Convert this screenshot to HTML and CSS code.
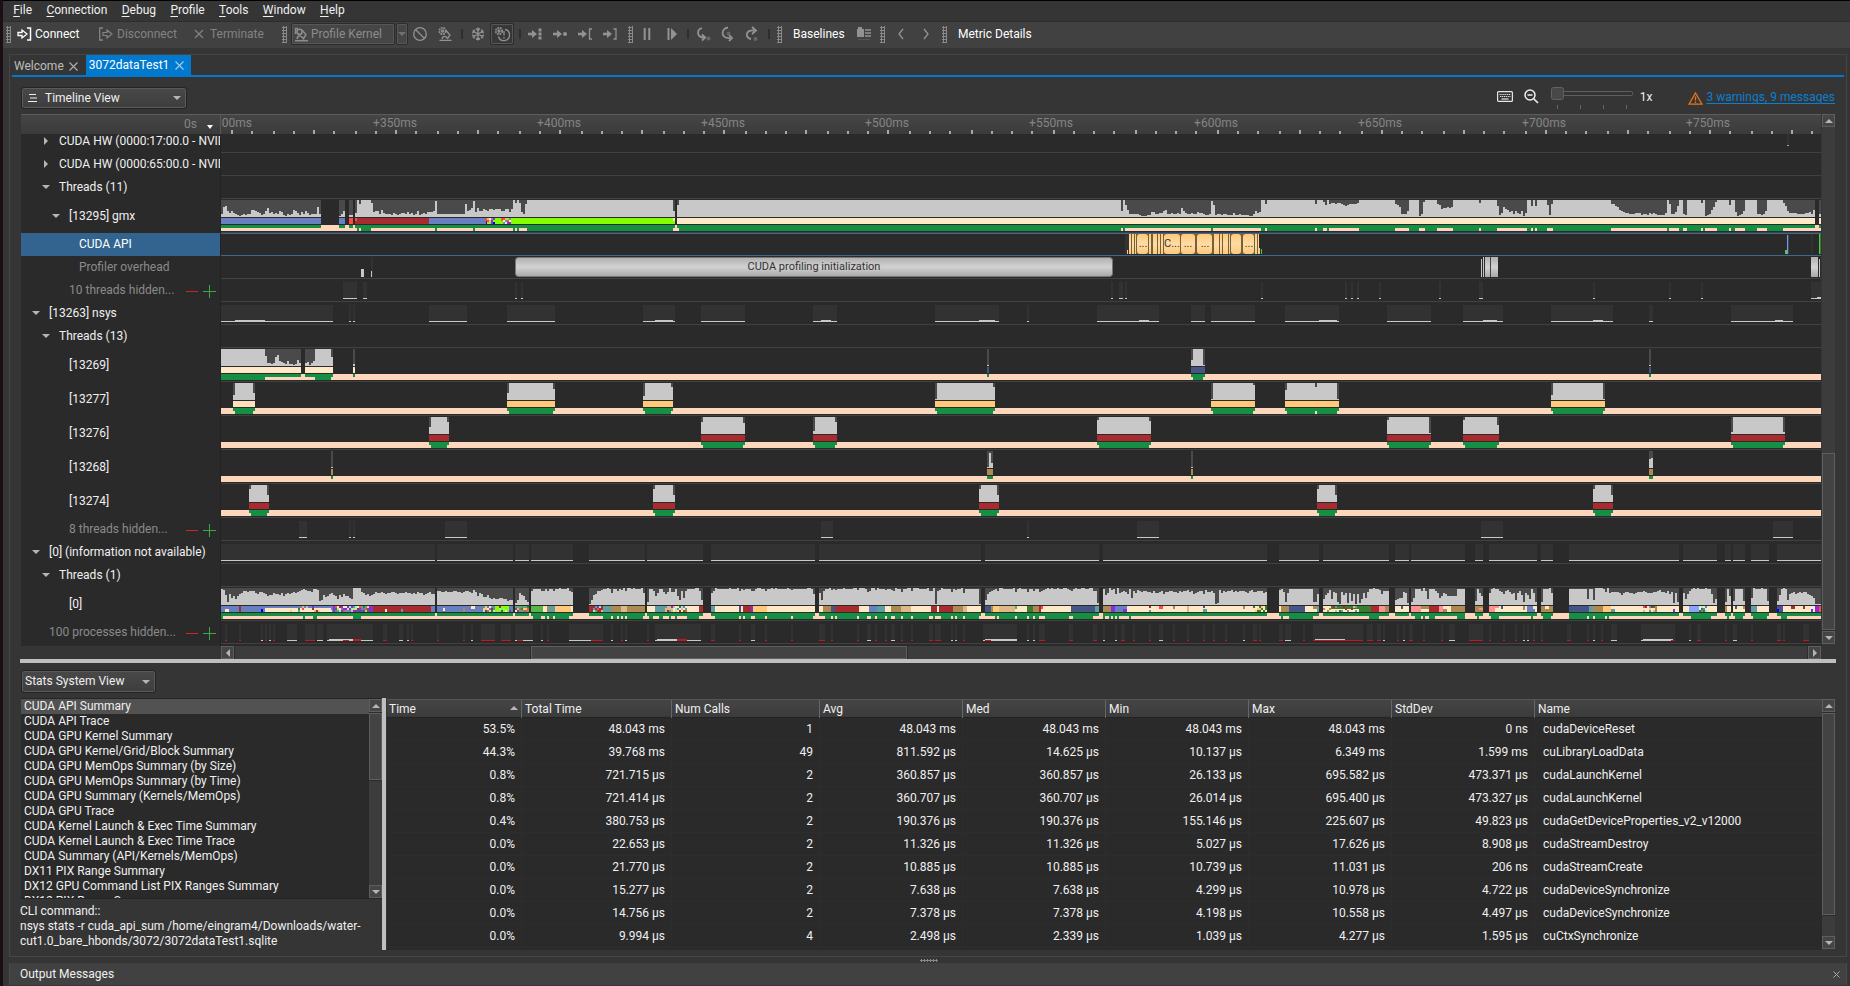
FILE: index.html
```html
<!DOCTYPE html>
<html lang="en">
<head>
<meta charset="utf-8">
<title>3072dataTest1</title>
<link rel="stylesheet" href="styles.css">
</head>
<body>
<div class="window">
  <nav class="menubar">
    <span><u>F</u>ile</span><span><u>C</u>onnection</span><span><u>D</u>ebug</span><span><u>P</u>rofile</span><span><u>T</u>ools</span><span><u>W</u>indow</span><span><u>H</u>elp</span>
  </nav>

  <div class="toolbar">
    <i class="grip"></i>
    <div class="tool on w-connect"><svg width="16" height="14" viewBox="0 0 16 14"><path d="M1 5.500h4V3l5 4-5 4V8.500H1z" fill="none" stroke="currentColor" stroke-width="1.300"/><path d="M10 1h3.500v12H10" fill="none" stroke="currentColor" stroke-width="1.500"/></svg>Connect</div>
    <div class="tool w-disconnect"><svg width="16" height="14" viewBox="0 0 16 14"><path d="M5 5.500h4V3l5 4-5 4V8.500H5z" fill="none" stroke="currentColor" stroke-width="1.200"/><path d="M5 1H1.700v12H5" fill="none" stroke="currentColor" stroke-width="1.300"/></svg>Disconnect</div>
    <div class="tool w-terminate"><svg width="10" height="10" viewBox="0 0 10 10"><path d="M1 1l8 8M9 1l-8 8" stroke="currentColor" stroke-width="1.200"/></svg>Terminate</div>
    <i class="grip"></i>
    <div class="framed w-kernel"><svg width="15" height="15" viewBox="0 0 15 15"><path d="M1.500 7V1.500H4" fill="none" stroke="currentColor" stroke-width="1.500"/><circle cx="5.500" cy="4.800" r="2.600" fill="none" stroke="currentColor" stroke-width="1.600"/><path d="M8 3l4 4.500-2.500 4M1 13.700h13M3 12c1-4.500 4-4 7 .5" fill="none" stroke="currentColor" stroke-width="1.500"/></svg>Profile Kernel</div>
    <div class="framed w-drop"><b class="tri down dim"></b></div>
    <svg class="ic a1" width="16" height="16" viewBox="0 0 16 16"><circle cx="8" cy="8" r="6.300"/><path d="M3.500 3.500l9 9"/></svg>
    <svg class="ic a2" width="16" height="16" viewBox="0 0 16 16"><circle cx="5.500" cy="5" r="3.200" stroke-dasharray="1.800 .8" stroke-width="1.800"/><circle cx="5.500" cy="5" r="1"/><path d="M9 4.500l4 4.500-2.500 3.500M2.500 14.300h12M5 13c1-4 4-3 6 0"/></svg>
    <i class="sep"></i>
    <svg class="ic a3" width="16" height="16" viewBox="0 0 16 16"><path d="M8 1.500v13M2.400 4.700l11.200 6.600M2.400 11.300l11.200-6.600M6 2.500l2 2 2-2M6 13.500l2-2 2 2M2 7l2.500-1L4 3.500M14 7l-2.500-1 .5-2.500M2 9l2.500 1L4 12.500M14 9l-2.500 1 .5 2.500"/></svg>
    <div class="framed active"><svg class="ic" width="16" height="16" viewBox="0 0 16 16"><circle cx="5" cy="5" r="3.200" stroke-dasharray="1.800 .8" stroke-width="1.800"/><circle cx="5" cy="5" r="1"/><path d="M11 3.500a5.600 5.600 0 1 1-6.500 7M10 5v4.500M10 11v1.500"/></svg></div>
    <i class="sep"></i>
    <svg class="ic step" width="16" height="14" viewBox="0 0 16 14"><path d="M1 7h5" stroke-width="2.600"/><path d="M5 3l5 4-5 4z" class="f"/><path d="M13 1.500v11" stroke-width="3" stroke-dasharray="3 1"/></svg>
    <svg class="ic step" width="16" height="14" viewBox="0 0 16 14"><path d="M1 7h5" stroke-width="2.600"/><path d="M5 3l5 4-5 4z" class="f"/><circle cx="13" cy="7" r="2" class="f"/></svg>
    <svg class="ic step" width="16" height="14" viewBox="0 0 16 14"><path d="M1 7h5" stroke-width="2.600"/><path d="M5 3l5 4-5 4z" class="f"/><path d="M15 2h-2.500v10H15"/></svg>
    <svg class="ic step" width="16" height="14" viewBox="0 0 16 14"><path d="M1 7h5" stroke-width="2.600"/><path d="M5 3l5 4-5 4z" class="f"/><path d="M11.500 2H14v10h-2.500"/></svg>
    <i class="grip g3"></i>
    <svg class="ic a4" width="14" height="14" viewBox="0 0 14 14"><path d="M4.700 1v12M9.300 1v12" stroke-width="2"/></svg>
    <svg class="ic a5" width="14" height="14" viewBox="0 0 14 14"><path d="M3.500 1v12" stroke-width="2"/><path d="M6 1l6 6-6 6z" class="f"/></svg>
    <i class="sep s2"></i>
    <svg class="ic step" width="15" height="16" viewBox="0 0 15 16"><path d="M6 2C0 4 1 11.500 8 11.500M6 8.500l3.200 3L6 14.500" stroke-width="1.800"/><circle cx="12.500" cy="12.500" r="2" class="f dimf"/></svg>
    <svg class="ic step" width="15" height="16" viewBox="0 0 15 16"><path d="M8 1.500C1 2 0 13 10 12M9 9l3 3-3 3" stroke-width="1.800"/><circle cx="8.500" cy="7.500" r="2" class="f dimf"/></svg>
    <svg class="ic step" width="15" height="16" viewBox="0 0 15 16"><path d="M7 13C1 12 1 4 10 4.500M8 1l4 3.500-4 3.500" stroke-width="1.800"/><circle cx="11.500" cy="13" r="2" class="f dimf"/></svg>
    <i class="sep s3"></i><i class="grip g4"></i>
    <div class="tool on w-base">Baselines</div>
    <svg class="ic a6" width="14" height="14" viewBox="0 0 14 14"><path d="M0 2h7v8H0zM1 0h4v2H1z" class="f"/><path d="M8 3h6M8 6h6M8 9h6" /><path d="M1 12.500h12" stroke="#555"/></svg>
    <i class="grip g5"></i>
    <svg class="ic a7" width="8" height="12" viewBox="0 0 8 12"><path d="M6 1L2 6l4 5"/></svg>
    <svg class="ic a8" width="8" height="12" viewBox="0 0 8 12"><path d="M2 1l4 5-4 5"/></svg>
    <i class="grip g6"></i>
    <div class="tool on w-metric">Metric Details</div>
  </div>

  <section class="panel">
    <div class="tabs">
      <div class="tab">Welcome<svg width="9" height="9" viewBox="0 0 9 9"><path d="M.5 .5l8 8M8.500 .5l-8 8"/></svg></div>
      <div class="tab current">3072dataTest1<svg width="9" height="9" viewBox="0 0 9 9"><path d="M.5 .5l8 8M8.500 .5l-8 8"/></svg></div>
    </div>

    <div class="viewbar">
      <div class="combo c-time"><svg width="10" height="10" viewBox="0 0 10 10"><path d="M1 1.500h7M2 5h7M0 8.500h9" stroke="#eee" stroke-width="1.200"/></svg><span>Timeline View</span><b class="tri down"></b></div>
      <div class="viewtools">
        <svg class="kbd" width="16" height="11" viewBox="0 0 16 11"><rect x=".6" y=".6" width="14.800" height="9.800" rx="1" fill="none" stroke="#e6e6e6" stroke-width="1.200"/><path d="M2.500 3.500h11M3 5.500h10.500" stroke="#e6e6e6" stroke-width="1.100" stroke-dasharray="1.200 .7"/><path d="M4.500 8h7" stroke="#e6e6e6" stroke-width="1.200"/></svg>
        <svg class="mag" width="15" height="15" viewBox="0 0 15 15"><circle cx="6" cy="6" r="5" fill="none" stroke="#eee" stroke-width="1.500"/><path d="M3.500 6h5M9.700 9.700l4.300 4.300" stroke="#eee" stroke-width="1.600"/></svg>
        <svg class="slider" width="84" height="24" viewBox="0 0 84 24"><rect x="12.500" y="4.500" width="69" height="4" rx="1" fill="#333" stroke="#5f5f5f"/><rect x=".5" y=".5" width="12" height="12" rx="2" fill="#484848" stroke="#626262"/><path d="M6.500 18v4M29.500 18v4M52.500 18v4M75.500 18v4" stroke="#666"/></svg>
        <span class="zoomlabel">1x</span>
        <svg class="warn" width="15" height="13" viewBox="0 0 15 13"><path d="M7.500 1L14 12.200H1z" fill="none" stroke="#e8761f" stroke-width="1.300"/><path d="M7.500 4.500v4M7.500 9.500v1.500" stroke="#e8761f" stroke-width="1.300"/></svg>
        <a class="warnlink">3 warnings, 9 messages</a>
      </div>
    </div>

    <div class="timeline">
      <div class="corner">0s<b class="tri down white"></b></div>
      <div class="ruler"><svg id="ruler" width="1600" height="20"></svg></div>
      <div class="labels">
        <div class="lb first l2"><b class="tri right"></b>CUDA HW (0000:17:00.0 - NVIDIA)</div>
        <div class="lb l2"><b class="tri right"></b>CUDA HW (0000:65:00.0 - NVIDIA)</div>
        <div class="lb l2"><b class="tri down"></b>Threads (11)</div>
        <div class="lb tall l3"><b class="tri down"></b>[13295] gmx</div>
        <div class="lb l4 selected">CUDA API</div>
        <div class="lb l4 muted">Profiler overhead</div>
        <div class="lb l3 muted">10 threads hidden...<i class="minus"></i><i class="plus"></i></div>
        <div class="lb l1"><b class="tri down"></b>[13263] nsys</div>
        <div class="lb l2"><b class="tri down"></b>Threads (13)</div>
        <div class="lb tall l3">[13269]</div>
        <div class="lb tall l3">[13277]</div>
        <div class="lb tall l3">[13276]</div>
        <div class="lb tall l3">[13268]</div>
        <div class="lb tall l3">[13274]</div>
        <div class="lb l3 muted">8 threads hidden...<i class="minus"></i><i class="plus"></i></div>
        <div class="lb l1"><b class="tri down"></b>[0] (information not available)</div>
        <div class="lb l2"><b class="tri down"></b>Threads (1)</div>
        <div class="lb tall l3">[0]</div>
        <div class="lb l1 muted">100 processes hidden...<i class="minus"></i><i class="plus"></i></div>
      </div>
      <div class="lanes">
        <div class="lane first"><svg data-lane="hw"></svg></div>
        <div class="lane"></div>
        <div class="lane"></div>
        <div class="lane tall"><svg data-lane="gmx"></svg></div>
        <div class="lane picked"><svg data-lane="api"></svg></div>
        <div class="lane"><svg data-lane="overhead"></svg></div>
        <div class="lane"><svg data-lane="hidden10"></svg></div>
        <div class="lane"><svg data-lane="nsys"></svg></div>
        <div class="lane"></div>
        <div class="lane tall"><svg data-lane="t13269"></svg></div>
        <div class="lane tall"><svg data-lane="t13277"></svg></div>
        <div class="lane tall"><svg data-lane="t13276"></svg></div>
        <div class="lane tall"><svg data-lane="t13268"></svg></div>
        <div class="lane tall"><svg data-lane="t13274"></svg></div>
        <div class="lane"><svg data-lane="hidden8"></svg></div>
        <div class="lane"><svg data-lane="info"></svg></div>
        <div class="lane"></div>
        <div class="lane tall"><svg data-lane="zero"></svg></div>
        <div class="lane"><svg data-lane="hidden100"></svg></div>
      </div>
      <div class="vscroll v-time"><span class="btn"><b class="tri up"></b></span><span class="track t1"></span><span class="thumb"></span><span class="btn"><b class="tri down"></b></span></div>
      <div class="hscroll"><span class="btn"><b class="tri left"></b></span><span class="track h1"></span><span class="thumb"></span><span class="track h2"></span><span class="btn"><b class="tri right"></b></span></div>
    </div>

    <div class="hsplit"></div>
    <div class="statbar"><div class="combo c-stats"><span>Stats System View</span><b class="tri down"></b></div></div>

    <div class="stats">
      <div class="reports">
        <div class="listbox">
          <ul>
            <li class="sel">CUDA API Summary</li><li>CUDA API Trace</li><li>CUDA GPU Kernel Summary</li><li>CUDA GPU Kernel/Grid/Block Summary</li><li>CUDA GPU MemOps Summary (by Size)</li><li>CUDA GPU MemOps Summary (by Time)</li><li>CUDA GPU Summary (Kernels/MemOps)</li><li>CUDA GPU Trace</li><li>CUDA Kernel Launch &amp; Exec Time Summary</li><li>CUDA Kernel Launch &amp; Exec Time Trace</li><li>CUDA Summary (API/Kernels/MemOps)</li><li>DX11 PIX Range Summary</li><li>DX12 GPU Command List PIX Ranges Summary</li><li>DX12 PIX Range Summary</li>
          </ul>
          <div class="vscroll"><span class="btn"><b class="tri up"></b></span><span class="thumb t-list"></span><span class="track fill"></span><span class="btn"><b class="tri down"></b></span></div>
        </div>
        <p class="cli">CLI command::<br>nsys stats -r cuda_api_sum /home/eingram4/Downloads/water-<br>cut1.0_bare_hbonds/3072/3072dataTest1.sqlite</p>
      </div>
      <div class="vsplit"></div>
      <div class="grid">
        <div class="tr th"><span>Time<b class="tri up"></b></span><span>Total Time</span><span>Num Calls</span><span>Avg</span><span>Med</span><span>Min</span><span>Max</span><span>StdDev</span><span>Name</span></div>
        <div class="tr"><span>53.5%</span><span>48.043 ms</span><span>1</span><span>48.043 ms</span><span>48.043 ms</span><span>48.043 ms</span><span>48.043 ms</span><span>0 ns</span><span>cudaDeviceReset</span></div>
        <div class="tr"><span>44.3%</span><span>39.768 ms</span><span>49</span><span>811.592 μs</span><span>14.625 μs</span><span>10.137 μs</span><span>6.349 ms</span><span>1.599 ms</span><span>cuLibraryLoadData</span></div>
        <div class="tr"><span>0.8%</span><span>721.715 μs</span><span>2</span><span>360.857 μs</span><span>360.857 μs</span><span>26.133 μs</span><span>695.582 μs</span><span>473.371 μs</span><span>cudaLaunchKernel</span></div>
        <div class="tr"><span>0.8%</span><span>721.414 μs</span><span>2</span><span>360.707 μs</span><span>360.707 μs</span><span>26.014 μs</span><span>695.400 μs</span><span>473.327 μs</span><span>cudaLaunchKernel</span></div>
        <div class="tr"><span>0.4%</span><span>380.753 μs</span><span>2</span><span>190.376 μs</span><span>190.376 μs</span><span>155.146 μs</span><span>225.607 μs</span><span>49.823 μs</span><span>cudaGetDeviceProperties_v2_v12000</span></div>
        <div class="tr"><span>0.0%</span><span>22.653 μs</span><span>2</span><span>11.326 μs</span><span>11.326 μs</span><span>5.027 μs</span><span>17.626 μs</span><span>8.908 μs</span><span>cudaStreamDestroy</span></div>
        <div class="tr"><span>0.0%</span><span>21.770 μs</span><span>2</span><span>10.885 μs</span><span>10.885 μs</span><span>10.739 μs</span><span>11.031 μs</span><span>206 ns</span><span>cudaStreamCreate</span></div>
        <div class="tr"><span>0.0%</span><span>15.277 μs</span><span>2</span><span>7.638 μs</span><span>7.638 μs</span><span>4.299 μs</span><span>10.978 μs</span><span>4.722 μs</span><span>cudaDeviceSynchronize</span></div>
        <div class="tr"><span>0.0%</span><span>14.756 μs</span><span>2</span><span>7.378 μs</span><span>7.378 μs</span><span>4.198 μs</span><span>10.558 μs</span><span>4.497 μs</span><span>cudaDeviceSynchronize</span></div>
        <div class="tr"><span>0.0%</span><span>9.994 μs</span><span>4</span><span>2.498 μs</span><span>2.339 μs</span><span>1.039 μs</span><span>4.277 μs</span><span>1.595 μs</span><span>cuCtxSynchronize</span></div>
      </div>
      <div class="vscroll"><span class="btn"><b class="tri up"></b></span><span class="thumb t-grid"></span><span class="track fill"></span><span class="btn"><b class="tri down"></b></span></div>
    </div>
  </section>

  <div class="dots"></div>
  <footer class="output"><span>Output Messages</span><svg width="7" height="7" viewBox="0 0 7 7"><path d="M.5 .5l6 6M6.500 .5l-6 6" stroke="#aaa"/></svg></footer>
</div>
<script src="lanes.js"></script>
</body>
</html>
```
FILE: styles.css
```css
* { box-sizing: border-box; }
body { margin: 0; width: 1850px; height: 986px; overflow: hidden; background: #1b0f17; font: 12px/15px Roboto, "Liberation Sans", sans-serif; color: #f0f0f0; }
svg { display: block; flex: none; }
i, b { font-style: normal; flex: none; }
.window { margin-left: 3px; height: 986px; border-top: 1px solid #000; background: #353535; display: flex; flex-direction: column; }

.menubar { display: flex; height: 20px; padding: 0 0 0 3px; line-height: 18px; }
.menubar span { padding: 0 7.200px; white-space: nowrap; }
.menubar u { text-underline-offset: 2px; }

.toolbar { display: flex; align-items: center; height: 27px; background: #414141; border-top: 1px solid #2e2e2e; padding: 0 0 2px 3px; color: #838383; white-space: nowrap; }
.grip { width: 5px; height: 17px; background-image: radial-gradient(circle, #8a8a8a 0 1px, transparent 1.100px); background-size: 3px 3px; }
.tool { display: flex; align-items: center; gap: 2px; flex: none; }
.tool.on { color: #fff; }
.w-connect { width: 80px; padding-left: 6px; }
.w-disconnect { width: 97px; padding-left: 7px; gap: 3px; }
.w-terminate { width: 94px; padding-left: 6px; gap: 6px; }
.framed { display: flex; align-items: center; flex: none; height: 22px; border: 1px solid #2c2c2c; border-radius: 2px; background: #464646; box-shadow: inset 0 0 0 1px #575757; color: #8c8c8c; }
.w-kernel { width: 104px; margin-left: 4px; padding-left: 2px; gap: 2px; }
.w-drop { width: 12px; justify-content: center; margin-left: 1px; }
.active { width: 24px; justify-content: center; margin-left: 4px; background: #383838; }
.sep { width: 2px; height: 10px; background: #2e2e2e; }
.ic { fill: none; stroke: #929292; stroke-width: 1.300; }
.ic .f { fill: #929292; stroke: none; }
.ic .dimf { fill: #666; }
.a1 { margin-left: 4px; } .a2 { margin: 0 8px 0 9px; } .a3 { margin-left: 7px; }
.active + .sep { margin: 0 6px 0 5px; }
.step { margin-right: 9px; }
.g3 { margin-left: 1px; } .a4 { margin-left: 7px; } .a5 { margin-left: 11px; }
.s2 { margin: 0 7px 0 8px; } .s3 { margin-left: 0; } .g4 { margin-left: 7px; }
.w-base { width: 76px; padding-left: 11px; } .g5 { margin-left: 9px; } .a6 { margin-left: -1px; }
.a7 { margin: 0 17px 0 12px; } .g6 { margin-left: 12px; } .w-metric { padding-left: 11px; }

.panel { display: flex; flex-direction: column; margin: 6px 3px 0 6px; height: 903px; border: 1px solid #454545; padding-left: 11px; }
.tabs { display: flex; flex: none; height: 22px; margin: 0 2px 0 -9px; border-bottom: 2px solid #0079cf; }
.tab { display: flex; align-items: center; padding: 3px 8px 0 3px; margin-left: -1px; color: #bdbdbd; }
.tab svg { margin-left: 5px; stroke: #b0b0b0; stroke-width: 1.100; fill: none; }
.tab.current { background: #0079cf; color: #fff; padding: 2px 7px 1px 3px; margin-left: 0; }
.tab.current svg { stroke: #9fd0f2; margin-left: 6px; }

.viewbar { display: flex; justify-content: space-between; height: 37px; flex: none; padding: 10px 11px 0 0; }
.combo { display: flex; align-items: center; height: 22px; border: 1px solid #242424; border-radius: 3px; background: linear-gradient(#484848, #3e3e3e); box-shadow: inset 0 0 0 1px #5a5a5a; }
.combo .tri { margin-left: auto; margin-right: 5px; }
.c-time { width: 166px; padding-left: 6px; } .c-time span { margin-left: 7px; }
.c-stats { width: 135px; padding-left: 3px; margin-top: 7px; height: 23px; }
.viewtools { display: flex; align-items: flex-start; }
.kbd { margin-top: 4px; } .mag { margin: 2px 0 0 11px; } .slider { margin: 0 0 0 12px; }
.zoomlabel { margin: 3px 36px 0 5px; } .warn { margin-top: 5px; }
.warnlink { margin: 3px 0 0 3px; color: #0b7fd0; text-decoration: underline; text-underline-offset: 2px; }

.tri { width: 0; height: 0; border: 4px solid transparent; }
.tri.down { border-top: 4px solid #b5b5b5; border-bottom: 0; }
.tri.up { border-bottom: 4px solid #b5b5b5; border-top: 0; }
.tri.right { border-left: 4px solid #b5b5b5; border-right: 0; }
.tri.left { border-right: 4px solid #b5b5b5; border-left: 0; }
.tri.dim { border-top-color: #707070; } .tri.white { border-width: 4px 3px 0; border-top-color: #fff; }

.timeline { display: grid; flex: none; grid-template-columns: 200px 1600px 14px; grid-template-rows: 20px 512px 13px; height: 545px; }
.corner, .ruler { background: linear-gradient(#454545, #3b3b3b); border-top: 1px solid #5c5c5c; color: #858585; }
.corner { display: flex; justify-content: flex-end; align-items: center; gap: 10px; padding-right: 7px; border-right: 1px solid #5a5a5a; }
.corner .tri { margin-top: 4px; }
.ruler svg { margin-top: -1px; } .ruler text { fill: #858585; text-anchor: middle; }
.labels { background: #2a2a2a; overflow: hidden; border-right: 1px solid #232323; }
.lb { position: relative; display: flex; align-items: center; height: 23px; padding: 0 0 1px var(--in); white-space: nowrap; overflow: hidden; }
.lb.first { height: 19px; padding-bottom: 5px; }
.lb.tall { height: 34px; padding-bottom: 0; }
.l1 { --in: 28px; } .l2 { --in: 38px; } .l3 { --in: 48px; } .l4 { --in: 58px; }
.lb .tri { position: absolute; left: calc(var(--in) - 17px); }
.lb .tri.right { left: calc(var(--in) - 15px); }
.muted { color: #8a8a8a; } .selected { background: #32648f; color: #fff; }
.minus { position: absolute; left: 165px; top: 12px; width: 12px; height: 1px; background: #d82020; }
.plus { position: absolute; left: 182px; top: 6px; width: 13px; height: 13px; background: linear-gradient(#3fa648, #3fa648) center / 13px 1px no-repeat, linear-gradient(#3fa648, #3fa648) center / 1px 13px no-repeat; }
.lanes { background: #2a2a2a; }
.lane { height: 23px; border-bottom: 1px solid #414141; }
.lane.first { height: 19px; } .lane.tall { height: 34px; }
.lane.picked { border-bottom-color: #3d6a90; box-shadow: inset 0 1px #3d6a90; }
.lane svg { width: 1600px; height: 100%; shape-rendering: crispEdges; overflow: visible; }
.lane text { font-size: 11px; fill: #333; text-anchor: middle; }

.vscroll { display: flex; flex-direction: column; width: 13px; margin-left: 1px; background: #2c2c2c; }
.v-time { grid-column: 3; grid-row: 1 / 3; height: 530px; }
.timeline .labels { grid-column: 1; grid-row: 2; } .timeline .lanes { grid-column: 2; grid-row: 2; }
.btn { width: 13px; height: 13px; flex: none; display: flex; align-items: center; justify-content: center; border: 1px solid #5e5e5e; background: #454545; }
.track { background: #3c3c3c; }
.thumb { border: 1px solid #5e5e5e; background: #434343; }
.t1 { height: 326px; } .v-time .thumb { height: 177px; margin-bottom: 1px; }
.fill { flex: 1; margin-top: 1px; } .t-list { height: 67px; margin-top: 1px; } .t-grid { height: 202px; margin-top: 1px; }
.hscroll { grid-column: 2; grid-row: 3; display: flex; background: #2c2c2c; }
.h1 { flex: 0 0 295px; margin: 0 1px; } .hscroll .thumb { flex: 0 0 376px; margin-right: 1px; } .h2 { flex: 1; margin-right: 1px; }
.hsplit { height: 4px; flex: none; background: #bfbfbf; margin: 0 10px 0 -1px; }
.statbar { height: 35px; flex: none; }

.stats { display: flex; flex: none; height: 252px; }
.reports { width: 361px; }
.listbox { display: flex; height: 201px; border: 1px solid #252525; border-width: 1px 0; background: #2a2a2a; }
.listbox ul { flex: 1; margin: 0; padding: 0; list-style: none; overflow: hidden; }
.listbox li { height: 15px; padding-left: 3px; line-height: 14px; white-space: nowrap; }
.listbox li.sel { background: #525252; }
.listbox .vscroll { margin-left: 0; }
.cli { margin: 5px 0 0 -1px; white-space: nowrap; }
.vsplit { width: 4px; background: #bfbfbf; }
.grid { width: 1435px; margin-left: 1px; margin-top: 1px; background: #2a2a2a; overflow: hidden; }
.stats > .vscroll { height: 250px; margin-top: 1px; margin-left: 0; }
.tr { display: grid; grid-template-columns: 135px 150px 148px 143px 143px 143px 143px 143px 1fr; height: 23px; line-height: 23px; border-bottom: 1px solid #2d2d2d; }
.tr span { text-align: right; padding-right: 6px; border-right: 1px solid #2d2d2d; white-space: nowrap; }
.tr span:last-child { text-align: left; padding-left: 8px; border: 0; }
.th { height: 19px; line-height: 19px; background: linear-gradient(#454545, #3b3b3b); border-top: 1px solid #555; border-bottom: 1px solid #222; }
.tr.th span { text-align: left; padding-left: 3px; border-right: 1px solid #666; }
.tr.th span:last-child { border: 0; }
.th span:first-child { display: flex; justify-content: space-between; align-items: center; padding-right: 3px; }
.tr.th span:first-child { padding-left: 2px; padding-right: 3px; }
.th .tri { margin-top: -3px; }

.dots { position: relative; left: 2px; height: 6px; flex: none; width: 18px; margin: 0 auto; background: radial-gradient(circle, #888 0 1px, transparent 1.100px) 0 2px / 3px 3px repeat-x; }
.output { display: flex; align-items: center; justify-content: space-between; flex: none; height: 22px; margin: 0 3px 0 6px; padding: 0 6px 0 10px; background: #414141; border: 1px solid #4a4a4a; border-width: 0 1px; }
```
FILE: lanes.js
```js
const ORIGIN = 221;
const LIGHT = '#c8c8c8', DARK = '#4a4a4a', FAINT = '#323232', GREEN = '#148f44', IDLE = '#fdd6bb';
const CREAM = '#ffe8c6', AMBER = '#ffc978', RED = '#a82b30', BLUE = '#6880c0', NAVY = '#465684', TAN = '#ad8a52', LIME = '#84ff00';
const TEAL = '#5f9ea0', BURLY = '#deb887', LEAF = '#3a7d2c', FRESH = '#55b848', PINK = '#ff9090', PURPLE = '#8a2be2', HOT = '#ff4848', ALERT = '#c8141e';

function rect(x0, x1, y, h, fill) {
  return `<rect x="${x0 - ORIGIN}" y="${y}" width="${x1 - x0}" height="${h}" fill="${fill}"/>`;
}
function expand(s) {
  return s.replace(/\s/g, '').replace(/(.)\{(\d+)\}/g, (m, c, n) => c.repeat(+n));
}
// One utilisation run: each character is a bar height, two pixels wide.
function run(x0, text) {
  const hs = [...expand(text)].map(c => parseInt(c, 36));
  const x1 = x0 + hs.length * 2;
  let out = rect(x0, x1, 1, 17, DARK) + rect(x0, x1, 26, 3, GREEN);
  for (let i = 0; i < hs.length;) {
    let j = i;
    while (j < hs.length && hs[j] === hs[i]) j++;
    out += rect(x0 + i * 2, x0 + j * 2, 18 - hs[i], hs[i], LIGHT);
    if (hs[i] >= 16) out += rect(x0 + i * 2, x0 + j * 2, 29, 3, GREEN);
    i = j;
  }
  return out;
}
function thread(runs, bars) {
  return rect(221, 1821, 26, 6, IDLE) + runs.map(r => run(r[0], r[1])).join('') +
    bars.map(b => rect(b[0], b[1], b[3] || 19, b[4] || 6, b[2])).join('');
}
function faint(spans, bumps) {
  return spans.map(s => rect(s[0], s[1], 3, 16, FAINT) + rect(s[0], s[1], 19, 1, s[2] || LIGHT)).join('') +
    (bumps || []).map(b => rect(b[0], b[1], 18, 1, LIGHT)).join('');
}
let seed = 7;
const rnd = () => (seed = (seed * 16807) % 2147483647) / 2147483647;
function noise(n, lo, hi) {
  let s = '';
  for (let i = 0; i < n; i++) s += Math.round(lo + rnd() * (hi - lo)).toString(36);
  return s;
}
// A fully busy run from a to b with short dips: [x, heights].
function dips(a, b, list) {
  const hs = Array((b - a) / 2).fill(0).map(() => (rnd() > 0.35 ? 'g' : 'h'));
  list.forEach(([x, text]) => [...text].forEach((c, i) => { const k = (x - a) / 2 + i; if (k < hs.length) hs[k] = c; }));
  return [a, hs.join('')];
}
// Scattered one-cell samples between a and b, in three stacked bands.
function speckle(a, b, colors, density) {
  const out = [];
  for (let x = a; x < b; x += 2) for (let k = 0; k < 3; k++) {
    if (rnd() < density) out.push([x, x + 2, colors[Math.floor(rnd() * colors.length)], 19 + k * 2, 2]);
  }
  return out;
}

const lanes = {};
lanes.hw = rect(1787, 1789, 0, 11, FAINT) + rect(1787, 1789, 11, 1, '#6ab0e8');

lanes.gmx = thread([
  [221, '3ab646432123233776542369453436521323764253642333a3'.slice(0, 50)],
  [339, '136'], [349, '22'],
  [355, '4hdhhhhhe' + '566374333243234435342362343555' + '6g' + '3{14}' + 'd679g' + noise(19, 5, 9) + 'hehe53dh{73}6'],
  [677, 'ch{221}6hc7' + '333332111225533446733433439643343354432233' .slice(0, 41) + 'gc' + '2332332224223222211364' + '5' + 'hhdh{24}dhhhfch' + 'deedeedcbcdddde' + 'h{18}dca3336' + 'h{5}13fh{6}' + 'dc899a9a' + 'h{13}eh{8}' + 'b24a87563643614' + 'hhbhbh{5}c2dh{29}' + 'ddba76544333444233243432222' + '4' + 'hd335bhh32h{7}eh1237afh{6}chh51236h{6}33236h{8}' + 'eb64444333344537'],
  [1819, '3'],
], [[221, 321, BLUE], [339, 345, BLUE], [349, 353, HOT], [355, 430, RED], [355, 357, HOT, 19, 3], [429, 486, BLUE], [485, 487, HOT, 19, 3], [487, 511, LIME],
  ...speckle(487, 495, [HOT, PURPLE, TEAL, CREAM, '#00f', BURLY], 0.9), [501, 503, HOT, 19, 3], ...speckle(503, 511, [HOT, PURPLE, TEAL, CREAM, '#00f', BURLY], 0.9),
  [511, 675, LIME], [673, 675, CREAM, 19, 3], [677, 1815, CREAM], [1819, 1821, CREAM]]);

const slots = [[1129, 1131], [1132, 1134], [1135, 1136], [1137, 1148], [1149, 1151], [1153, 1157], [1158, 1160], [1161, 1163], [1164, 1180], [1181, 1195], [1197, 1212], [1214, 1219], [1220, 1222], [1223, 1228], [1229, 1230], [1231, 1241], [1243, 1254], [1255, 1257], [1258, 1259]];
lanes.api = '<defs><linearGradient id="amber" x2="0" y2="1"><stop offset="0" stop-color="#ffc978"/><stop offset=".5" stop-color="#ffdca6"/><stop offset="1" stop-color="#ffc978"/></linearGradient><linearGradient id="silver" x2="0" y2="1"><stop offset="0" stop-color="#b0b0b0"/><stop offset=".5" stop-color="#d2d2d2"/><stop offset="1" stop-color="#a8a8a8"/></linearGradient></defs>' +
  rect(1125, 1129, 1, 20, '#333') + rect(1127, 1128, 17, 4, AMBER) + rect(1129, 1259, 1, 20, '#75603c') +
  slots.map(s => `<rect x="${s[0] - ORIGIN}" y="1" width="${s[1] - s[0]}" height="20" rx="${s[1] - s[0] > 8 ? 3 : 0}" fill="url(#amber)" style="shape-rendering:auto"/>`).join('') +
  [[1143, '...'], [1172, 'C...'], [1188, '...'], [1205, '...'], [1249, '...']].map(t => `<text x="${t[0] - ORIGIN}" y="14">${t[1]}</text>`).join('') +
  rect(1259, 1260, 15, 6, AMBER) + rect(1261, 1262, 16, 5, '#3fd03f') +
  rect(1785, 1787, 17, 4, '#50d040') + rect(1787, 1788, 2, 19, '#7f97dc') + rect(1788, 1789, 2, 19, '#3c4664') + rect(1811, 1813, 1, 20, FAINT) + rect(1819, 1820, 1, 20, '#50d040') + rect(1820, 1821, 1, 20, '#2f7a28');

lanes.overhead = '<rect x="294.500" y="1.500" width="597" height="19" rx="3" fill="url(#silver)" stroke="#777" style="shape-rendering:auto"/><text x="593" y="14">CUDA profiling initialization</text>' +
  rect(361, 364, 13, 8, LIGHT) + rect(371, 373, 1, 20, FAINT) + rect(371, 372, 15, 6, LIGHT) +
  rect(1481, 1482, 3, 18, LIGHT) + rect(1483, 1484, 1, 20, LIGHT) + rect(1485, 1498, 1, 20, 'url(#silver)') + rect(1490, 1491, 1, 20, '#444') +
  rect(1811, 1818, 1, 20, 'url(#silver)') + rect(1819, 1820, 3, 18, LIGHT);

lanes.hidden10 = faint([[343, 357], [363, 367], [515, 517], [521, 523], [1111, 1113], [1119, 1123], [1125, 1127], [1261, 1263], [1345, 1347], [1351, 1353], [1357, 1359], [1379, 1381], [1439, 1441], [1479, 1483], [1593, 1595], [1669, 1671], [1701, 1703], [1811, 1821]], [[1817, 1821]]);
lanes.nsys = faint([[221, 333], [349, 351], [353, 355], [429, 467], [507, 555], [643, 675], [701, 745], [813, 837], [935, 999], [1027, 1029], [1097, 1159], [1191, 1205], [1211, 1255], [1285, 1339], [1387, 1431], [1463, 1503], [1551, 1613], [1649, 1653], [1731, 1793]],
  [[235, 265], [655, 673], [821, 831], [979, 995], [1139, 1149], [1319, 1337], [1483, 1497], [1593, 1603], [1775, 1783]]);

lanes.t13269 = thread([[221, 'h{22}a33239b54325221263'], [305, '34135h{8}9'], [353, '2'], [987, '1'], [1191, '6h{5}1'], [1649, '1']],
  [[221, 301, CREAM], [305, 333, CREAM], [353, 355, CREAM], [987, 989, NAVY], [1191, 1205, NAVY], [1649, 1651, NAVY]]);
lanes.t13277 = thread([[233, '5h{9}7'], [507, '7h{22}b'], [643, '4h{13}d'], [935, '1h{28}d'], [1211, '1h{20}f'], [1285, 'ah{14}dh{10}1'], [1551, '5h{25}1']],
  [[233, 255, '#ffe0bd'], [507, 555, AMBER], [643, 673, AMBER], [935, 995, AMBER], [1211, 1255, AMBER], [1285, 1339, AMBER], [1551, 1605, AMBER]]);
lanes.t13276 = thread([[429, '7h{8}c'], [701, 'ch{20}b'], [813, '3h{10}c'], [1097, 'eh{25}d'], [1387, 'eh{20}1'], [1463, 'eh{16}9'], [1731, '2h{25}2']],
  [[429, 449], [701, 745], [813, 837], [1097, 1151], [1387, 1431], [1463, 1499], [1731, 1785]].map(s => [...s, RED]));
lanes.t13268 = thread([[331, '1'], [987, '1f5'], [1191, '1'], [1649, '9a']],
  [[331, 333, TAN], [987, 993, TAN], [1191, 1193, TAN], [1649, 1653, TAN]]);
lanes.t13274 = thread([[249, 'dh{8}7'], [653, 'dh{9}7'], [979, 'dh{8}7'], [1317, 'dh{8}7'], [1593, 'dh{8}7']],
  [[249, 269], [653, 675], [979, 999], [1317, 1337], [1593, 1613]].map(s => [...s, RED]));
lanes.hidden8 = faint([[299, 307], [349, 351], [353, 355], [445, 467], [821, 833], [1027, 1029], [1137, 1159], [1481, 1503], [1773, 1793]]);

const busy = [[221, 435], [437, 513], [515, 529], [531, 573], [589, 645], [647, 703], [711, 815], [819, 981], [985, 1099], [1103, 1267], [1279, 1319], [1323, 1389], [1395, 1409], [1411, 1465], [1475, 1483], [1489, 1537], [1541, 1553], [1569, 1679], [1683, 1717], [1725, 1731], [1733, 1745], [1751, 1769], [1777, 1821]];
lanes.info = faint(busy);

const any = [CREAM, RED, TEAL, AMBER, BLUE, LEAF, HOT, PURPLE, '#80ffc0', BURLY];
lanes.zero = thread([
  [221, 'gfa3b7969bceedeeecbddcb9aacbbac9bcbcdcdefgfeedggf45a89bca96a8b9976hhhhdcab9abdccdcbccddcbcccdccbcbdccabcdbb6'.slice(0, 107)],
  [437, 'eeddedddeeddcdeedcfd9cb88a76766776645568'.slice(0, 38)],
  [515, '25ca953'],
  dips(531, 573, [[531, 'e'], [541, 'ee'], [547, 'e'], [553, 'e'], [569, 'ed']]),
  dips(589, 645, [[589, '15abeef'], [611, 'c'], [617, 'e'], [621, 'f'], [625, 'e'], [643, 'c']]),
  dips(647, 703, [[647, '3'], [653, 'e9c'], [663, 'dbd'], [671, 'dd'], [677, '95e7e'], [699, 'e5']]),
  dips(711, 815, [[711, 'ce'], [739, 'e'], [743, 'f'], [751, 'ee'], [765, 'e'], [791, 'f'], [813, 'b']]),
  dips(819, 981, [[819, 'c5e'], [831, 'f'], [835, 'f'], [857, 'f'], [867, 'de'], [875, 'f'], [885, 'f'], [891, 'fe'], [901, 'd'], [911, 'e'], [929, 'ee'], [935, '1ef'], [951, 'd'], [955, 'f'], [963, 'c'], [979, '1']]),
  dips(985, 1099, [[985, '5bdef'], [997, 'e'], [1015, 'd'], [1027, 'd'], [1033, 'e'], [1039, 'def'], [1069, 'fe'], [1093, 'ee2']]),
  [1103, 'gachfgbhcdedbg7ecfedeeddceccdebddeeddcedeefdebcdeebfddec12fcedeefdedeeedcefddeeecda2ha'.slice(0, 82)],
  [1279, 'fgd3cgggggggggggg33b'],
  [1323, '6acf6dc31dac2c4b1b26c7dgghggfbeee37'.slice(0, 33)],
  [1395, '5677dc2'],
  [1411, '37gggehe6gggec79cb99999gggg'],
  [1475, '4gc9'],
  [1489, 'cghggedbefdbc5cea3ca6gc3'],
  [1541, '3ggghc'],
  [1569, 'ggggggggg' + '6gg5hhhhgdhcddddcacddccbcdddedcccddefddcebd2c3h3c8'.slice(0, 46)],
  [1683, 'c6beghghggghggb26'],
  [1725, '3g9'], [1733, '4gggg4'], [1751, '7hggghgg4'],
  [1777, '4aghg5bcdbcdcddba97111'],
], [
  [221, 435, BLUE], [225, 229, CREAM, 22, 3], [239, 241, RED], [261, 263, '#00f', 22, 3], [265, 331, CREAM, 21, 4], ...speckle(290, 332, any, 0.35), [333, 373, PURPLE], ...speckle(335, 369, any, 0.85), [373, 431, RED], [385, 387, CREAM, 22, 3], [401, 403, TEAL, 22, 3],
  [437, 513, BLUE], [443, 445, CREAM, 21, 3], [463, 465, TAN, 21, 4], [471, 475, CREAM, 19, 3], ...speckle(483, 497, any, 0.7), [495, 509, LIME], ...speckle(497, 513, any, 0.35),
  [515, 529, FRESH], ...speckle(515, 529, any, 0.7),
  [531, 543, FRESH], [543, 547, CREAM], [547, 549, TAN], [549, 555, TEAL], [555, 571, AMBER], [571, 573, CREAM],
  [589, 603, RED], ...speckle(589, 603, any, 0.4), [603, 611, TEAL], [611, 621, TAN], [621, 627, BURLY], [627, 645, TAN],
  [647, 655, CREAM], [655, 665, TEAL], [665, 673, BURLY], [673, 699, CREAM], ...speckle(665, 687, any, 0.5), [699, 703, RED],
  [711, 715, TEAL], [715, 815, CREAM], [739, 741, NAVY], [743, 751, RED], [751, 755, PURPLE], [753, 767, AMBER],
  [819, 981, CREAM], [823, 831, TAN], [831, 835, NAVY], [835, 859, RED], [869, 877, BLUE], [877, 885, TEAL], [891, 901, TAN], [901, 911, BURLY], [931, 937, RED], [939, 953, RED], [953, 963, TAN], [963, 967, BURLY],
  [985, 1099, CREAM], [985, 991, NAVY], [991, 993, TAN], [993, 999, AMBER], [999, 1015, BURLY], [1015, 1017, FRESH, 19, 3], [1027, 1033, LEAF], [1033, 1039, TAN], [1039, 1041, RED], [1041, 1043, HOT, 19, 3], [1071, 1095, NAVY], [1095, 1099, TEAL],
  [1103, 1267, CREAM], [1103, 1113, TAN], [1111, 1117, PURPLE], [1115, 1127, BLUE], [1123, 1127, PURPLE, 22, 3], [1149, 1151, RED, 19, 2], [1149, 1151, TEAL, 23, 2], [1159, 1163, HOT, 19, 3], [1173, 1175, TAN, 19, 3], [1187, 1189, BURLY], [1203, 1205, NAVY, 19, 2], [1203, 1207, TEAL, 22, 3], [1243, 1245, TAN, 19, 3], ...speckle(1253, 1267, [LEAF, LEAF, AMBER, CREAM], 0.7),
  [1279, 1319, CREAM], [1281, 1289, TAN], [1289, 1305, NAVY], [1313, 1319, TAN, 19, 3], [1317, 1319, TEAL],
  [1323, 1359, CREAM], ...speckle(1323, 1331, [LEAF, TAN, CREAM], 0.7), [1331, 1359, LEAF, 19, 3], ...speckle(1331, 1359, [CREAM, RED, TEAL, LEAF, BURLY], 0.3), [1359, 1371, LEAF], [1371, 1379, RED], [1379, 1385, PINK], [1385, 1389, TAN],
  [1395, 1409, CREAM], [1401, 1403, NAVY, 19, 3],
  [1411, 1465, CREAM], [1411, 1421, PINK], [1421, 1429, TAN, 19, 3], [1429, 1439, RED], [1439, 1443, PINK], [1443, 1447, TAN, 22, 3], [1451, 1465, TAN],
  [1475, 1483, TAN], [1479, 1483, PINK, 21, 2], [1489, 1537, CREAM], [1489, 1495, PINK], [1495, 1499, PINK, 19, 2], [1501, 1503, NAVY, 19, 3], [1523, 1525, TAN, 19, 4], [1527, 1533, BLUE], [1533, 1535, BLUE, 22, 3],
  [1541, 1553, TAN], [1545, 1549, CREAM, 19, 3],
  [1569, 1679, CREAM], [1569, 1589, NAVY], [1589, 1593, TEAL], [1593, 1603, TAN], [1603, 1611, AMBER], [1611, 1615, TEAL, 22, 3], ...speckle(1643, 1655, any, 0.4), [1655, 1657, TAN], [1673, 1675, PURPLE, 22, 3],
  [1683, 1717, CREAM], [1689, 1699, '#8aa4ff'], ...speckle(1699, 1707, [LEAF, '#80ffc0', CREAM, BLUE], 0.9),
  [1725, 1731, CREAM], [1725, 1727, TAN], [1733, 1745, CREAM], [1735, 1737, NAVY, 19, 3], [1743, 1745, TAN, 19, 3], [1751, 1757, TEAL], [1757, 1769, CREAM],
  [1777, 1821, CREAM], [1777, 1783, NAVY], [1777, 1779, '#00f', 22, 3], [1781, 1783, PURPLE, 19, 3], [1791, 1795, RED, 19, 3], [1803, 1805, RED, 19, 3], [1811, 1813, PURPLE, 22, 3], [1815, 1819, PURPLE], [1819, 1821, HOT],
]);

const R = ALERT, W = LIGHT;
lanes.hidden100 = faint([
  [225, 227, R], [239, 241, R], [261, 263, W], [265, 267, R], [269, 271, W], [273, 275, R], [287, 297, W], [305, 315, R], [317, 323, W], [327, 373, W], [383, 387, R], [399, 403, W], [407, 409, W], [411, 413, R], [437, 439, R], [463, 465, R], [471, 473, W], [481, 495, R], [501, 511, R], [515, 533, W], [517, 523, R], [541, 543, W], [547, 549, R], [569, 603, W], [591, 603, R],
  [611, 613, W], [621, 623, R], [625, 627, W], [647, 649, R], [655, 701, W], [711, 715, R], [739, 741, R], [751, 755, W], [765, 767, R], [791, 793, R], [819, 825, R], [831, 833, R], [857, 859, R], [867, 871, W], [875, 877, R], [885, 887, R], [891, 895, W], [901, 903, R], [911, 913, R], [929, 933, R], [935, 941, R], [951, 953, W], [955, 957, W], [963, 965, R], [983, 1017, W],
  [1027, 1029, W], [1033, 1035, W], [1039, 1045, R], [1069, 1073, R], [1093, 1097, R], [1103, 1105, W], [1115, 1117, W], [1121, 1125, R], [1133, 1135, R], [1149, 1151, R], [1159, 1163, W], [1173, 1175, R], [1187, 1189, R], [1203, 1205, R], [1213, 1215, R], [1225, 1227, R], [1243, 1245, W], [1253, 1257, R], [1259, 1261, R], [1279, 1283, R], [1285, 1291, W], [1303, 1305, R], [1313, 1363, R],
  [1367, 1373, R], [1377, 1381, R], [1383, 1385, W], [1397, 1399, R], [1403, 1405, W], [1409, 1413, R], [1423, 1425, R], [1441, 1443, R], [1449, 1455, W], [1469, 1483, R], [1489, 1491, R], [1503, 1505, R], [1515, 1517, R], [1523, 1525, W], [1527, 1529, W], [1533, 1535, R], [1541, 1543, R], [1567, 1571, R], [1587, 1589, R], [1593, 1595, W], [1601, 1603, R], [1611, 1617, W], [1641, 1675, W],
  [1689, 1691, W], [1697, 1701, R], [1725, 1727, R], [1733, 1737, W], [1751, 1753, R], [1777, 1781, R], [1783, 1785, R], [1803, 1809, R],
], [[329, 361], [657, 687], [985, 1017], [1315, 1345], [1643, 1673]]) +
  rect(343, 349, 19, 1, R) + rect(353, 361, 18, 2, R) + rect(677, 687, 18, 2, R) + rect(985, 991, 19, 1, R) + rect(1671, 1675, 19, 1, R);

document.querySelectorAll('[data-lane]').forEach(svg => { svg.innerHTML = lanes[svg.dataset.lane]; });

let marks = '';
for (let i = 0; i < 78; i++) {
  const x = Math.round((231 + 20.53 * i - ORIGIN) / 2) * 2;
  const tall = i % 4 === 0;
  marks += `<rect x="${x}" y="${tall ? 16 : 17}" width="2" height="${tall ? 4 : 3}" fill="#a8a8a8"/>`;
  if (i % 8 === 0) marks += `<text x="${Math.round(230.4 + 164.2 * i / 8 - ORIGIN)}" y="13">+${300 + i / 8 * 50}ms</text>`;
}
document.getElementById('ruler').innerHTML = marks;
```
